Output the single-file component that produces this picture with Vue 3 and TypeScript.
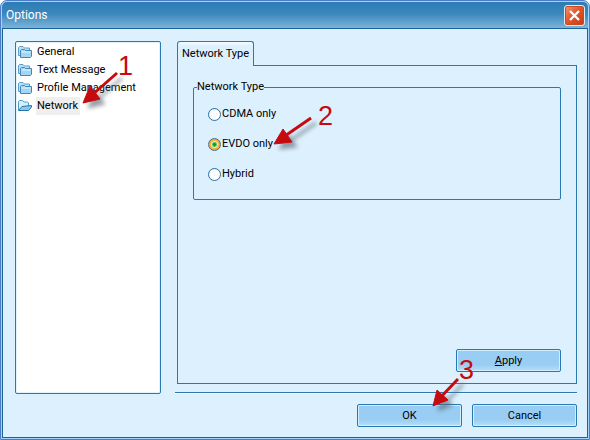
<script setup lang="ts">
import { ref } from 'vue'

interface Callout {
  label: string
  tail: [number, number]
  head: string
  text: [number, number]
}

const pages = ['General', 'Text Message', 'Profile Management', 'Network']
const networkTypes = ['CDMA only', 'EVDO only', 'Hybrid']
const page = ref('Network')
const networkType = ref('EVDO only')

// Coordinates are relative to the tip of each arrow.
const callouts: Record<string, Callout> = {
  Network: { label: '1', tail: [34, -30], head: '0,0 7,-17 17,-4', text: [35, -28] },
  'EVDO only': { label: '2', tail: [37, -26], head: '0,0 9,-15 18,-2', text: [44, -19] },
  OK: { label: '3', tail: [25, -27], head: '0,0 4,-16 15,-6', text: [26, -27] },
}
</script>

<template>
  <main class="window">
    <header class="title-bar">
      <h1 class="title">Options</h1>
      <button class="close" type="button" aria-label="Close">
        <svg width="11" height="11" viewBox="0 0 11 11" aria-hidden="true">
          <path d="M1 1L10 10M10 1L1 10" stroke="#fff" stroke-width="2.3" />
        </svg>
      </button>
    </header>

    <div class="content">
      <nav class="tree" aria-label="Option pages">
        <button
          v-for="name in pages"
          :key="name"
          type="button"
          class="tree-item"
          :class="{ current: page === name }"
          @click="page = name"
        >
          <svg v-if="page !== name" class="folder" width="14" height="12" viewBox="0 0 14 12" aria-hidden="true">
            <path d="M.5 9.5V1.5L1.5.5H5L6.5 2H11.500V9.5Z" fill="#b5e0f6" stroke="#5a9fcc" />
            <path d="M2.5 11.5V4.5L3.500 3.500H6.500L7.500 4.500H13.500V10.500L12.500 11.500Z" fill="#a4d6f2" stroke="#4187bb" />
            <path d="M3.500 6H12.500" stroke="#e0f7ff" />
          </svg>
          <svg v-else class="folder" width="14" height="12" viewBox="0 0 14 12" aria-hidden="true">
            <path d="M.5 10V1.500L1.500.5H4.500L6 2H9.500L10.500 3V6" fill="#d4f0fc" stroke="#4f9bcd" />
            <path d="M.5 10.500L4 6.500L13.500 5.500V7L10.500 10.500Z" fill="#8cc8ea" stroke="#2874a9" />
          </svg>
          <span class="tree-label">{{ name }}</span>
          <svg v-if="name === 'Network'" class="callout callout-tree" width="1" height="1" aria-hidden="true">
            <g class="shadow">
              <line x1="8" y1="-7" :x2="callouts[name].tail[0]" :y2="callouts[name].tail[1]" />
              <polygon :points="callouts[name].head" />
            </g>
            <g class="arrow">
              <line x1="8" y1="-7" :x2="callouts[name].tail[0]" :y2="callouts[name].tail[1]" />
              <polygon :points="callouts[name].head" />
            </g>
            <text :x="callouts[name].text[0]" :y="callouts[name].text[1]">{{ callouts[name].label }}</text>
          </svg>
        </button>
      </nav>

      <section class="settings">
        <div class="tabs" role="tablist">
          <button class="tab" type="button" role="tab" aria-selected="true">Network Type</button>
        </div>
        <div class="panel" role="tabpanel">
          <fieldset class="group">
            <legend>Network Type</legend>
            <label v-for="name in networkTypes" :key="name" class="option">
              <input v-model="networkType" type="radio" name="network-type" :value="name" />
              <span>{{ name }}</span>
              <svg v-if="name === 'EVDO only'" class="callout callout-radio" width="1" height="1" aria-hidden="true">
                <g class="shadow">
                  <line x1="8" y1="-6" :x2="callouts[name].tail[0]" :y2="callouts[name].tail[1]" />
                  <polygon :points="callouts[name].head" />
                </g>
                <g class="arrow">
                  <line x1="8" y1="-6" :x2="callouts[name].tail[0]" :y2="callouts[name].tail[1]" />
                  <polygon :points="callouts[name].head" />
                </g>
                <text :x="callouts[name].text[0]" :y="callouts[name].text[1]">{{ callouts[name].label }}</text>
              </svg>
            </label>
          </fieldset>
          <button class="push" type="button"><span><u>A</u>pply</span></button>
        </div>
        <hr class="rule" />
        <footer class="actions">
          <button class="push" type="button">
            <span>OK</span>
            <svg class="callout callout-ok" width="1" height="1" aria-hidden="true">
              <g class="shadow">
                <line x1="6" y1="-7" :x2="callouts.OK.tail[0]" :y2="callouts.OK.tail[1]" />
                <polygon :points="callouts.OK.head" />
              </g>
              <g class="arrow">
                <line x1="6" y1="-7" :x2="callouts.OK.tail[0]" :y2="callouts.OK.tail[1]" />
                <polygon :points="callouts.OK.head" />
              </g>
              <text :x="callouts.OK.text[0]" :y="callouts.OK.text[1]">{{ callouts.OK.label }}</text>
            </svg>
          </button>
          <button class="push" type="button">Cancel</button>
        </footer>
      </section>
    </div>
  </main>
</template>

<style>
body {
  background: #fff;
}
</style>

<style scoped>
* {
  box-sizing: border-box;
}

.window {
  display: flex;
  flex-direction: column;
  min-height: 100vh;
  border: 1px solid #4c7bc8;
  border-radius: 7px 7px 0 0;
  background: #a4d5f5;
  padding: 1px;
  color: #000;
  font: 11px/18px Roboto, "Liberation Sans", sans-serif;
}

button {
  padding: 0;
  border: 0;
  background: none;
  color: inherit;
  font: inherit;
}

.title-bar {
  display: flex;
  align-items: center;
  justify-content: space-between;
  height: 26px;
  padding: 0 3px 0 4px;
  border-radius: 5px 5px 0 0;
  background: linear-gradient(#2c7cb5, #3b87bd 45%, #7db3d8);
}

.title {
  margin: 0;
  color: #fff;
  font-size: 12px;
  font-weight: 400;
}

.close {
  display: grid;
  place-items: center;
  width: 21px;
  height: 21px;
  border: 1px solid #d8eefa;
  border-radius: 3px;
  background: linear-gradient(135deg, #f29a79, #e4572b 45%, #c73a10);
  box-shadow: inset 0 0 0 1px #c94a20;
}

.content {
  flex: 1;
  display: flex;
  gap: 14px;
  padding: 12px 10px 10px 12px;
  border: 1px solid #1a649b;
  background: #ddf0fe;
}

.tree {
  display: flex;
  flex-direction: column;
  align-items: flex-start;
  width: 146px;
  margin-bottom: 33px;
  padding: 1px 2px;
  border: 1px solid #2879b3;
  border-radius: 2px;
  background: #fff;
  box-shadow: inset 0 0 0 1px #e3f2fc;
}

.tree-item {
  position: relative;
  display: flex;
  align-items: center;
  gap: 4px;
  height: 18px;
}

.folder {
  flex: none;
}

.tree-label {
  padding: 0 2px 0 1px;
  white-space: nowrap;
}

.current .tree-label {
  background: #efefef;
}

.settings {
  flex: 1;
  display: flex;
  flex-direction: column;
  min-width: 0;
}

.tabs {
  display: flex;
  padding: 0 0 0 2px;
}

.tab {
  position: relative;
  z-index: 1;
  height: 25px;
  margin-bottom: -1px;
  padding: 0 4px;
  border: 1px solid #2879b3;
  border-bottom: 0;
  border-radius: 3px 3px 0 0;
  background: linear-gradient(#f8fcff, #ddf0fe 4px);
  white-space: nowrap;
}

.panel {
  flex: 1;
  display: flex;
  flex-direction: column;
  align-items: flex-end;
  justify-content: space-between;
  margin-left: 2px;
  padding: 12px 15px 11px;
  border: 1px solid #2879b3;
}

.group {
  width: 100%;
  margin: 0;
  padding: 9px 14px 16px;
  border: 1px solid #2879b3;
  border-radius: 2px;
}

.group legend {
  margin-left: -11px;
  padding: 0;
}

.option {
  position: relative;
  display: flex;
  align-items: center;
  gap: 1px;
  width: max-content;
  height: 18px;
}

.option + .option {
  margin-top: 12px;
}

.option input {
  appearance: none;
  width: 13px;
  height: 13px;
  margin: 0;
  border: 1px solid #2e6f9f;
  border-radius: 50%;
  background: radial-gradient(circle at 60% 60%, #fff 40%, #e2eef6);
}

.option input:checked {
  border-color: #53718a;
  background: radial-gradient(circle, #16962b 0 1px, #58c85b 2px, #d8efbd 3px, #f8b640 4px, #ef9d20 6px);
}

.push {
  position: relative;
  width: 105px;
  height: 23px;
  border: 1px solid #2879b3;
  border-radius: 2px;
  background: linear-gradient(#99cdf3 70%, #b9def8);
  box-shadow: inset 0 0 0 1px #d0f0fe;
}

.rule {
  width: 100%;
  height: 2px;
  margin: 8px 0 10px;
  border: 0;
  border-top: 1px solid #2879b3;
  background: #fff;
}

.actions {
  display: flex;
  justify-content: flex-end;
  gap: 10px;
}

.callout {
  position: absolute;
  z-index: 2;
  overflow: visible;
  pointer-events: none;
}

.callout-tree {
  left: 65px;
  top: 6px;
}

.callout-radio {
  left: 66px;
  top: 9px;
}

.callout-ok {
  left: 75px;
  top: 1px;
}

.callout text {
  fill: #c50b10;
  font: 27px "Liberation Sans", sans-serif;
}

.arrow {
  fill: #c50b10;
  stroke: #c50b10;
}

.shadow {
  fill: #55606a;
  stroke: #55606a;
  opacity: 0.6;
  filter: blur(2px);
  transform: translate(5px, 5px);
}

.callout line {
  stroke-width: 3;
}

.callout polygon {
  stroke-width: 1;
}
</style>
